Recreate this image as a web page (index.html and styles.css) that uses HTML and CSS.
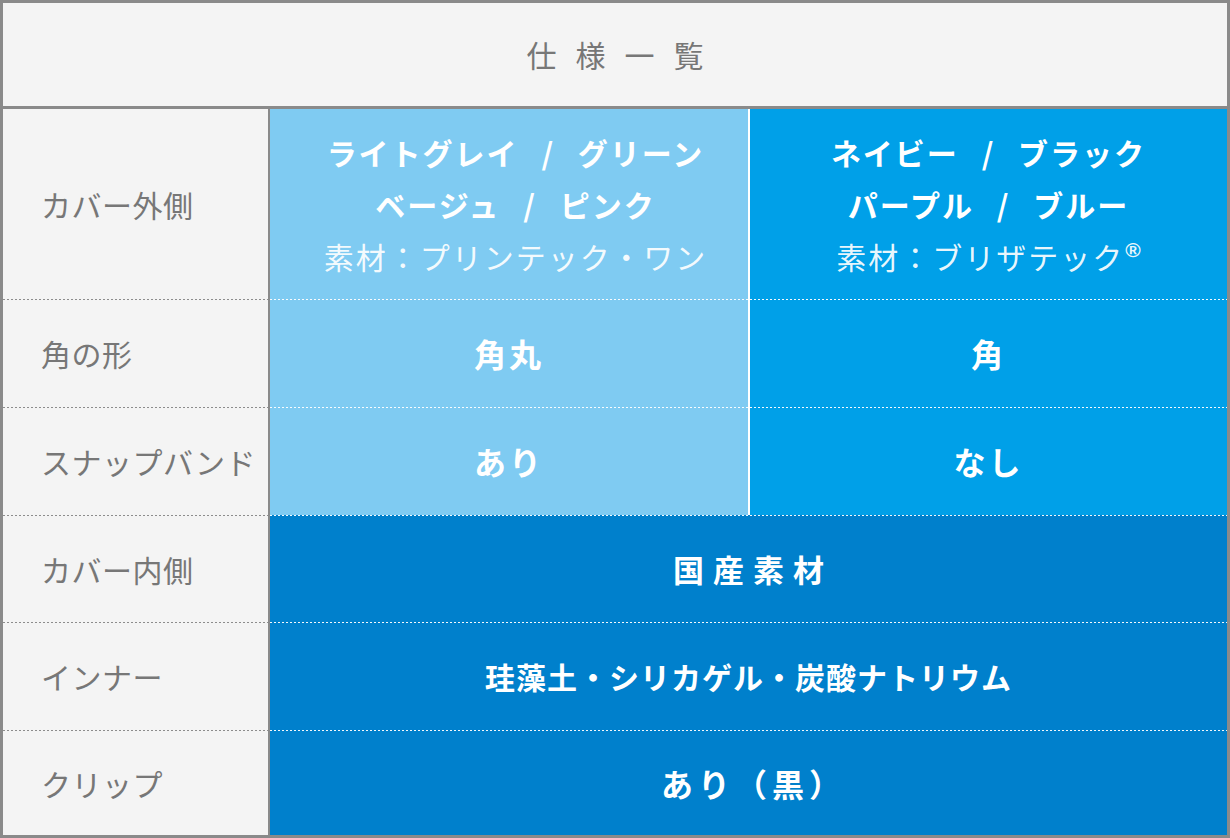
FILE: index.html
```html
<!DOCTYPE html>
<html lang="ja">
<head>
<meta charset="utf-8">
<title>仕様一覧</title>
<link rel="stylesheet" href="styles.css">
</head>
<body>
<div class="spec">
  <div class="spec-head"><span class="spec-title">仕様一覧</span></div>
  <div class="spec-body">
    <div class="label first">カバー外側</div>
    <div class="val light first shift">
      <div class="name">ライトグレイ / グリーン</div>
      <div class="name">ベージュ / ピンク</div>
      <div class="mat">素材：プリンテック・ワン</div>
    </div>
    <div class="val mid first">
      <div class="name">ネイビー / ブラック</div>
      <div class="name">パープル / ブルー</div>
      <div class="mat">素材：ブリザテック<sup class="reg">®</sup></div>
    </div>

    <div class="label">角の形</div>
    <div class="val light"><span class="big">角丸</span></div>
    <div class="val mid"><span class="big">角</span></div>

    <div class="label">スナップバンド</div>
    <div class="val light"><span class="big">あり</span></div>
    <div class="val mid"><span class="big">なし</span></div>

    <div class="label">カバー内側</div>
    <div class="val dark wide"><span class="big spaced">国産素材</span></div>

    <div class="label">インナー</div>
    <div class="val dark wide"><span class="big tight">珪藻土・シリカゲル・炭酸ナトリウム</span></div>

    <div class="label">クリップ</div>
    <div class="val dark wide"><span class="big paren">あり（黒）</span></div>
  </div>
</div>
</body>
</html>
```
FILE: styles.css
```css
html, body {
  margin: 0;
  padding: 0;
  background: #ffffff;
}

body {
  font-family: "Noto Sans CJK JP", "Noto Sans", sans-serif;
}

.spec {
  width: 1230px;
  height: 838px;
  box-sizing: border-box;
  border: 3px solid #8a8a8a;
  background: #f4f4f4;
  display: flex;
  flex-direction: column;
}

.spec-head {
  height: 106px;
  box-sizing: border-box;
  border-bottom: 3px solid #8a8a8a;
  display: flex;
  align-items: center;
  justify-content: center;
}

.spec-title {
  font-size: 30px;
  color: #777777;
  letter-spacing: 19px;
  padding-left: 19px;
  line-height: 1;
  margin-top: -2px;
}

.spec-body {
  display: grid;
  grid-template-columns: 267px 478px 479px;
  grid-template-rows: 190px 108px 108px 107px 108px 105px;
}

.label {
  box-sizing: border-box;
  border-right: 2px solid #8a8a8a;
  display: flex;
  align-items: center;
  padding-left: 38px;
  font-size: 30px;
  letter-spacing: 0.5px;
  color: #777777;
  background-color: #f4f4f4;
  background-image: repeating-linear-gradient(to right, #8c8c8c 0 2px, transparent 2px 4px);
  background-size: 100% 1px;
  background-repeat: no-repeat;
  background-position: top left;
}

.val {
  box-sizing: border-box;
  display: flex;
  flex-direction: column;
  align-items: center;
  justify-content: center;
  color: #ffffff;
  background-image: repeating-linear-gradient(to right, rgba(255,255,255,0.95) 0 2px, transparent 2px 4px);
  background-size: 100% 1px;
  background-repeat: no-repeat;
  background-position: top left;
}

.first {
  background-image: none;
}

.shift {
  padding-left: 13px;
}

.light {
  background-color: #7fcbf2;
}

.mid {
  background-color: #00a0e8;
  border-left: 2px solid #ffffff;
}

.dark {
  background-color: #0080cc;
}

.wide {
  grid-column: 2 / 4;
}

.name {
  font-size: 30px;
  font-weight: 700;
  line-height: 52px;
  letter-spacing: 2px;
  word-spacing: 14px;
  white-space: pre;
}

.mat {
  font-size: 30px;
  font-weight: 400;
  line-height: 52px;
  letter-spacing: 2px;
  color: rgba(255,255,255,0.92);
}

.reg {
  font-family: "Liberation Sans", sans-serif;
  font-weight: 700;
  font-size: 21px;
  vertical-align: 12px;
  line-height: 0;
  letter-spacing: 0;
  margin-left: 1px;
}

.big {
  font-size: 32px;
  font-weight: 700;
  letter-spacing: 3px;
  line-height: 1;
}

.spaced {
  letter-spacing: 9px;
  font-size: 31px;
  padding-left: 9px;
}

.tight {
  font-size: 30px;
  letter-spacing: 1px;
}

.paren {
  letter-spacing: 5px;
  padding-left: 10px;
}
```
